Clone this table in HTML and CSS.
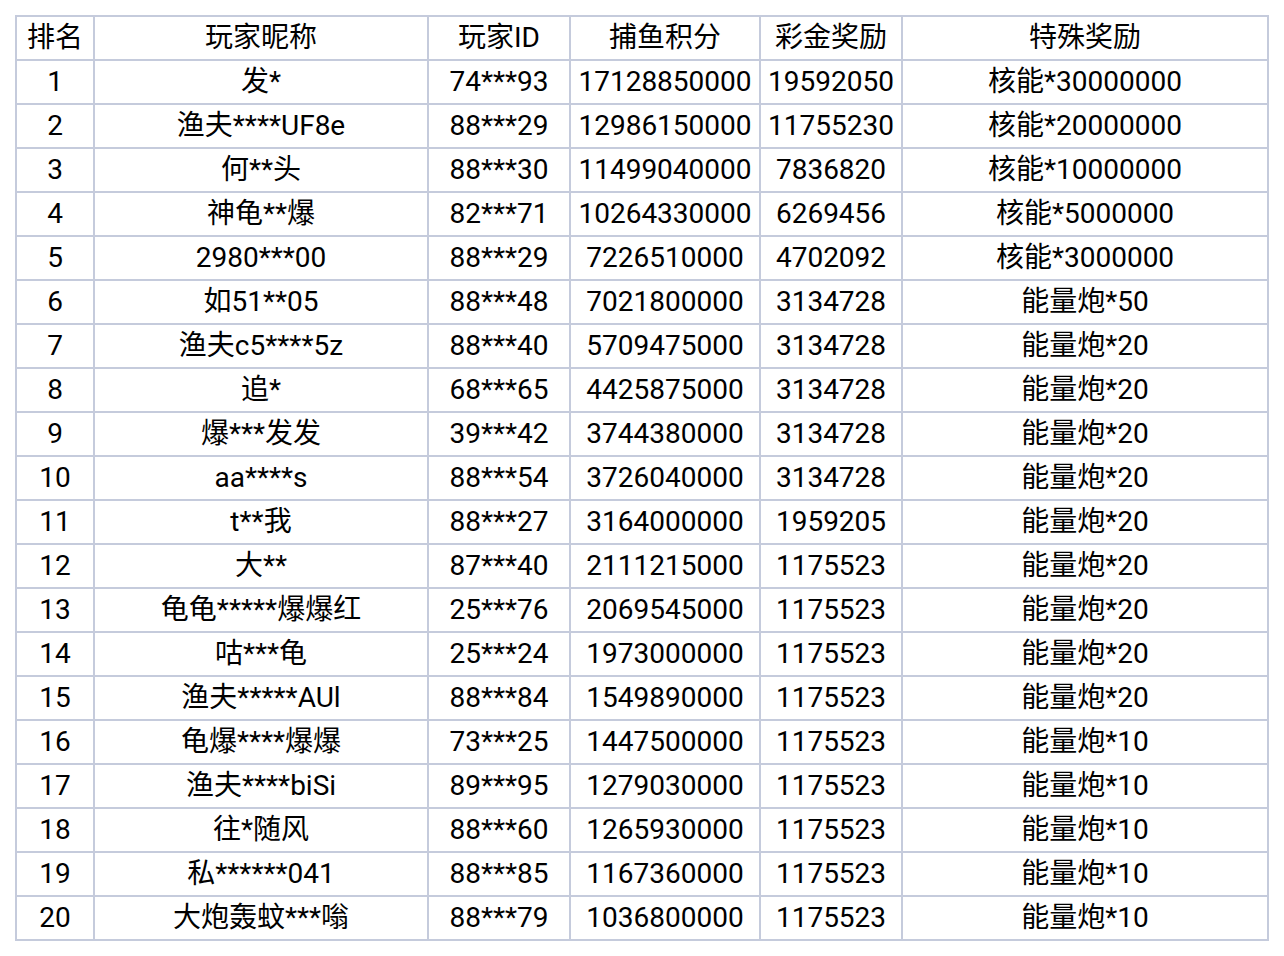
FILE: index.html
```html
<!DOCTYPE html>
<html>
<head>
<meta charset="utf-8">
<link rel="stylesheet" href="styles.css">
</head>
<body>
<table class="rank">
<colgroup>
<col class="c1"><col class="c2"><col class="c3"><col class="c4"><col class="c5"><col class="c6">
</colgroup>
<thead>
<tr><th>排名</th><th>玩家昵称</th><th>玩家ID</th><th>捕鱼积分</th><th>彩金奖励</th><th>特殊奖励</th></tr>
</thead>
<tbody>
<tr><td>1</td><td>发*</td><td>74***93</td><td>17128850000</td><td>19592050</td><td>核能*30000000</td></tr>
<tr><td>2</td><td>渔夫****UF8e</td><td>88***29</td><td>12986150000</td><td>11755230</td><td>核能*20000000</td></tr>
<tr><td>3</td><td>何**头</td><td>88***30</td><td>11499040000</td><td>7836820</td><td>核能*10000000</td></tr>
<tr><td>4</td><td>神龟**爆</td><td>82***71</td><td>10264330000</td><td>6269456</td><td>核能*5000000</td></tr>
<tr><td>5</td><td>2980***00</td><td>88***29</td><td>7226510000</td><td>4702092</td><td>核能*3000000</td></tr>
<tr><td>6</td><td>如51**05</td><td>88***48</td><td>7021800000</td><td>3134728</td><td>能量炮*50</td></tr>
<tr><td>7</td><td>渔夫c5****5z</td><td>88***40</td><td>5709475000</td><td>3134728</td><td>能量炮*20</td></tr>
<tr><td>8</td><td>追*</td><td>68***65</td><td>4425875000</td><td>3134728</td><td>能量炮*20</td></tr>
<tr><td>9</td><td>爆***发发</td><td>39***42</td><td>3744380000</td><td>3134728</td><td>能量炮*20</td></tr>
<tr><td>10</td><td>aa****s</td><td>88***54</td><td>3726040000</td><td>3134728</td><td>能量炮*20</td></tr>
<tr><td>11</td><td>t**我</td><td>88***27</td><td>3164000000</td><td>1959205</td><td>能量炮*20</td></tr>
<tr><td>12</td><td>大**</td><td>87***40</td><td>2111215000</td><td>1175523</td><td>能量炮*20</td></tr>
<tr><td>13</td><td>龟龟*****爆爆红</td><td>25***76</td><td>2069545000</td><td>1175523</td><td>能量炮*20</td></tr>
<tr><td>14</td><td>咕***龟</td><td>25***24</td><td>1973000000</td><td>1175523</td><td>能量炮*20</td></tr>
<tr><td>15</td><td>渔夫*****AUl</td><td>88***84</td><td>1549890000</td><td>1175523</td><td>能量炮*20</td></tr>
<tr><td>16</td><td>龟爆****爆爆</td><td>73***25</td><td>1447500000</td><td>1175523</td><td>能量炮*10</td></tr>
<tr><td>17</td><td>渔夫****biSi</td><td>89***95</td><td>1279030000</td><td>1175523</td><td>能量炮*10</td></tr>
<tr><td>18</td><td>往*随风</td><td>88***60</td><td>1265930000</td><td>1175523</td><td>能量炮*10</td></tr>
<tr><td>19</td><td>私******041</td><td>88***85</td><td>1167360000</td><td>1175523</td><td>能量炮*10</td></tr>
<tr><td>20</td><td>大炮轰蚊***嗡</td><td>88***79</td><td>1036800000</td><td>1175523</td><td>能量炮*10</td></tr>
</tbody>
</table>
</body>
</html>
```
FILE: styles.css
```css
html, body {
  margin: 0;
  padding: 0;
  background: #ffffff;
}
body {
  padding: 15px 0 0 15px;
  font-family: Roboto, "Noto Sans CJK SC", sans-serif;
  color: #000;
}
.rank {
  table-layout: fixed;
  border-collapse: separate;
  border-spacing: 0;
  width: 1254px;
  border-top: 2px solid #c5cbdc;
  border-left: 2px solid #c5cbdc;
}
.c1 { width: 78px; }
.c2 { width: 334px; }
.c3 { width: 142px; }
.c4 { width: 190px; }
.c5 { width: 142px; }
.c6 { width: 366px; }
.rank th,
.rank td {
  padding: 0;
  height: 42px;
  line-height: 42px;
  font-size: 28px;
  font-weight: normal;
  text-align: center;
  white-space: nowrap;
  overflow: hidden;
  border-right: 2px solid #c5cbdc;
  border-bottom: 2px solid #c5cbdc;
}
```
